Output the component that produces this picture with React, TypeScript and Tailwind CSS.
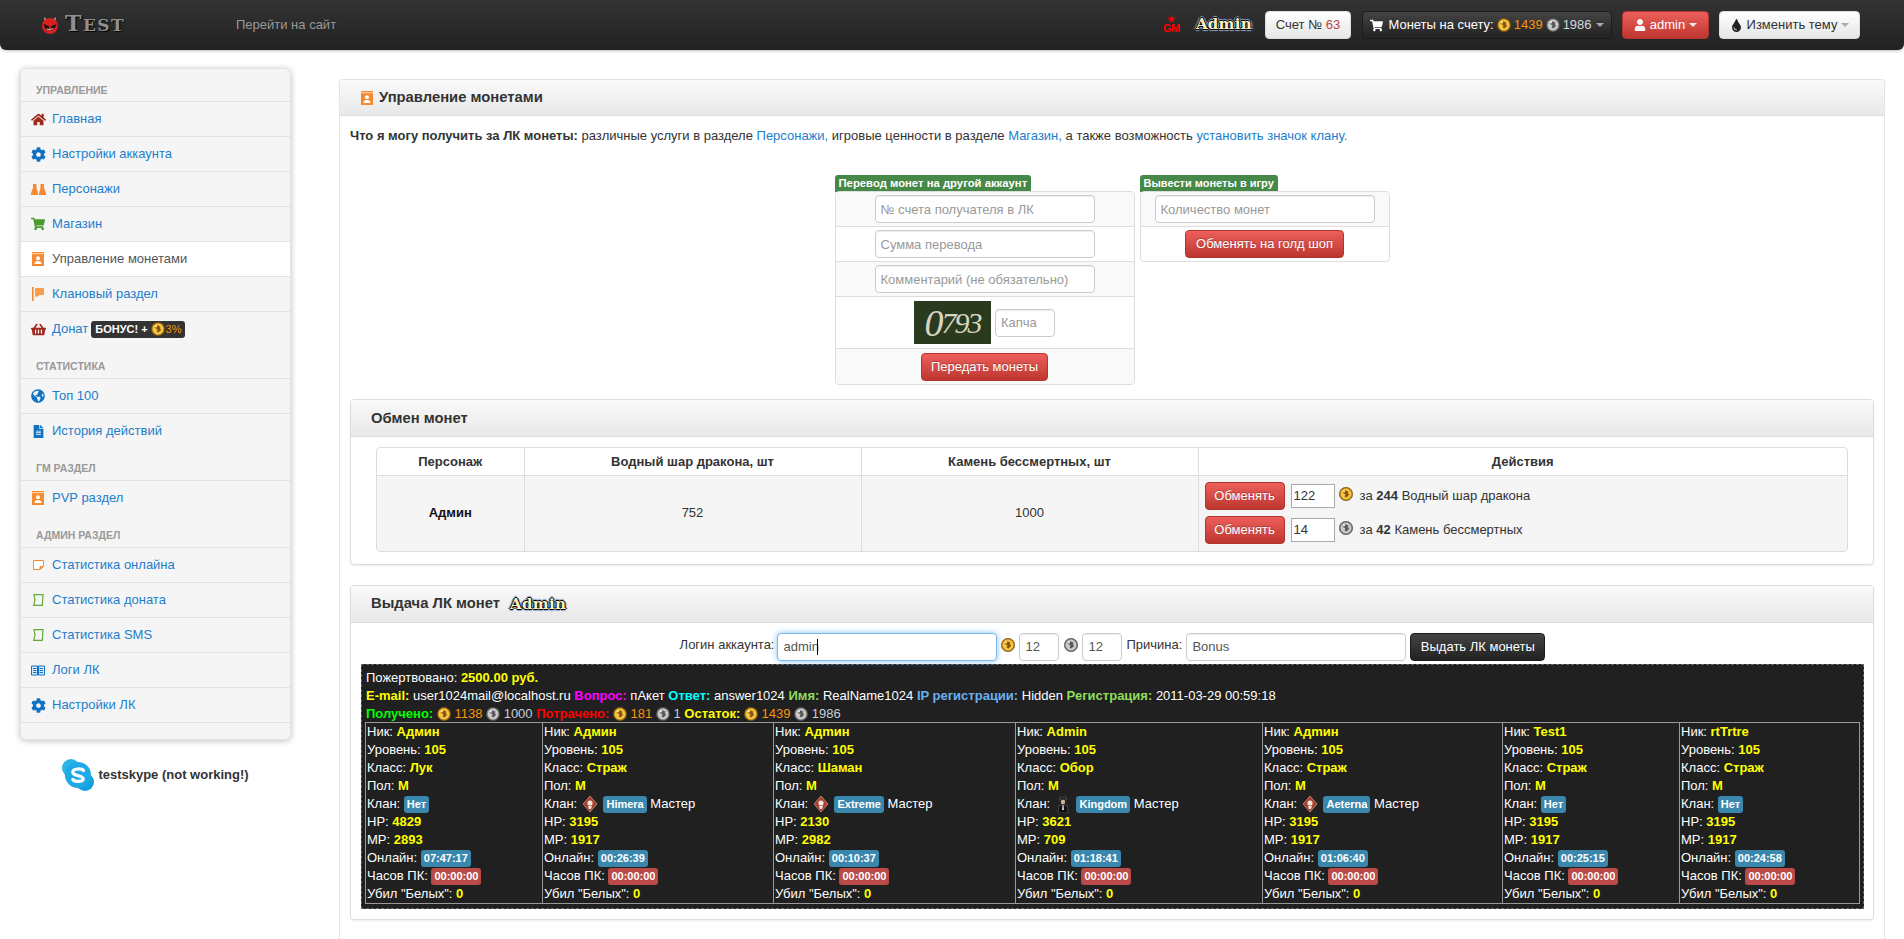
import React from 'react';
import {
  FaHome,
  FaCog,
  FaShoppingCart,
  FaShoppingBasket,
  FaGlobeAmericas,
  FaFileAlt,
  FaUser,
  FaTint,
} from 'react-icons/fa';

const Coin = ({ silver = false, size = 14 }: { silver?: boolean; size?: number }) => (
  <svg width={size} height={size} viewBox="0 0 14 14" className="inline-block shrink-0 align-[-3px]">
    <circle cx="7" cy="7" r="6.7" fill={silver ? '#777' : '#b57a1e'} stroke={silver ? '#444' : '#6a4412'} strokeWidth=".6" />
    <circle cx="7" cy="7" r="5.400" fill={silver ? '#cacaca' : '#f2c840'} />
    <path d="M3.500 5.500l3-2.200 3.200 1.500-1 1.200 1.500 1.800-2.700 2.600-2-1 1-1.800z" fill={silver ? '#5a5a5a' : '#8a5212'} />
    <circle cx="5" cy="4.500" r="1" fill={silver ? '#eee' : '#fff0a0'} />
  </svg>
);

const BadgeIcon = () => (
  <svg width="12" height="14" viewBox="0 0 12 14">
    <rect width="12" height="14" fill="#f58a32" />
    <rect y="1.200" width="12" height="1" fill="#ffd9b0" />
    <circle cx="6" cy="6.200" r="2" fill="#fff" />
    <path d="M2.500 12c0-2.400 1.600-3 3.500-3s3.500.6 3.500 3z" fill="#fff" />
  </svg>
);

const FlagIcon = () => (
  <svg width="12" height="14" viewBox="0 0 12 14">
    <rect x="0" y="0" width="1.600" height="14" fill="#f58a32" />
    <path d="M3 1h9v7H7.500L6 9.500H3z" fill="#fa9c4a" />
  </svg>
);

const PeopleIcon = () => (
  <svg width="15" height="11" viewBox="0 0 15 11">
    <path d="M2 0h3.500v4L7 9v2H0V9l2-5z" fill="#f58a32" />
    <path d="M9.500 0H13v4l2 5v2H8V9l1.500-5z" fill="#f58a32" />
  </svg>
);

const NoteIcon = () => (
  <svg width="11" height="10" viewBox="0 0 11 10">
    <path d="M.5.5h10v6l-3 3h-7z" fill="#fff" stroke="#f58a32" />
    <path d="M7 9V6.500h3" fill="#f58a32" stroke="#f58a32" />
  </svg>
);

const ScrollIcon = () => (
  <svg width="11" height="12" viewBox="0 0 11 12">
    <path d="M1 .7h9L9.300 11.300H.7L2 6z" fill="none" stroke="#62a83a" strokeWidth="1.200" />
  </svg>
);

const BookIcon = () => (
  <svg width="14" height="11" viewBox="0 0 14 11">
    <path d="M.5 1h6v9h-6zM7.500 1h6v9h-6z" fill="#dcebf8" stroke="#0f72c4" />
    <path d="M2 3.500h3.500M2 5.500h3.500M2 7.500h3.500M8.500 3.500H12M8.500 5.500H12M8.500 7.500H12" stroke="#0f72c4" />
  </svg>
);

const DevilIcon = () => (
  <svg width="18" height="18" viewBox="0 0 18 18">
    <path d="M3 1l1 5 3-1zM15 1l-1 5-3-1z" fill="#e8c8a0" />
    <circle cx="9" cy="10" r="8" fill="#d92020" />
    <path d="M2.500 8l6 2.500-1 1.500H4zM15.500 8l-6 2.500 1 1.500H14z" fill="#111" />
    <path d="M4 13q5 3 10-1.500-5 1.500-10 1.500z" fill="#fff" stroke="#300" strokeWidth=".6" />
  </svg>
);

const SkypeIcon = () => (
  <svg width="32" height="32" viewBox="0 0 32 32">
    <circle cx="9" cy="9" r="9" fill="#2bb3ea" />
    <circle cx="23" cy="23" r="9" fill="#12a0de" />
    <circle cx="16" cy="16" r="13" fill="#1eaae6" />
    <path d="M21.500 11.500C20 9.500 11 9 10.800 13c-.2 4.500 10.400 3 10.400 6.800 0 3.400-8.200 3.400-10.400.6" fill="none" stroke="#fff" strokeWidth="3.200" strokeLinecap="round" />
  </svg>
);

const ClanIcon = ({ dark = false }: { dark?: boolean }) =>
  dark ? (
    <svg width="18" height="18" viewBox="0 0 18 18" className="inline-block align-middle mr-[1px]">
      <path d="M6 2h6l1 3H5z" fill="#222" stroke="#777" strokeWidth=".4" />
      <circle cx="9" cy="7" r="2.200" fill="#c9b7a5" />
      <path d="M4 18l1-8h8l1 8z" fill="#101010" stroke="#888" strokeWidth=".4" />
      <path d="M8.500 10h1l.5 5h-2z" fill="#ddd" />
    </svg>
  ) : (
    <svg width="18" height="18" viewBox="0 0 18 18" className="inline-block align-middle mr-[1px]">
      <path d="M9 1l7 8-7 8-7-8z" fill="#a8402f" stroke="#d8a08a" strokeWidth=".7" />
      <circle cx="9" cy="8" r="2.600" fill="#f2e6dc" />
      <path d="M7 11h4l-1 3H8z" fill="#f2e6dc" />
    </svg>
  );

const GmIcon = () => (
  <div className="flex flex-col items-center w-[17px] text-[#f00] font-bold leading-none">
    <span className="text-[9px] h-[7px] leading-[7px]">★</span>
    <span className="text-[11px] leading-[11px] tracking-[-0.5px]">GM</span>
  </div>
);

const AdminLogo = () => (
  <span className="inline-block font-['DejaVu_Serif',serif] font-bold text-[15px] tracking-[0.3px] leading-[18px] text-[#fff2c0] [text-shadow:1px_0_0_#000,-1px_0_0_#000,0_1px_0_#000,0_-1px_0_#000,2px_0_1px_#8fa4d0,-2px_0_1px_#8fa4d0,0_2px_1px_#8fa4d0,0_-2px_1px_#8fa4d0]">
    Admin
  </span>
);

type NavItem = { label: React.ReactNode; icon: React.ReactNode; active?: boolean };
type Section = { title: string; items: NavItem[] };

const sections: Section[] = [
  {
    title: 'Управление',
    items: [
      { label: 'Главная', icon: <FaHome className="text-[#a12a20] text-[15px]" /> },
      { label: 'Настройки аккаунта', icon: <FaCog className="text-[#0f72c4] text-[15px]" /> },
      { label: 'Персонажи', icon: <PeopleIcon /> },
      { label: 'Магазин', icon: <FaShoppingCart className="text-[#4c9a2e] text-[14px]" /> },
      { label: 'Управление монетами', icon: <BadgeIcon />, active: true },
      { label: 'Клановый раздел', icon: <FlagIcon /> },
      {
        label: (
          <span className="flex items-center gap-[3px]">
            Донат
            <span className="flex items-center h-[17px] pl-[4px] pr-[3px] rounded-[3px] bg-[#333] text-white text-[11px] font-bold">
              БОНУС! +
              <span className="ml-[3px] flex"><Coin /></span>
              <span className="text-[#f89406] font-normal ml-[1px]">3%</span>
            </span>
          </span>
        ),
        icon: <FaShoppingBasket className="text-[#a12a20] text-[15px]" />,
      },
    ],
  },
  {
    title: 'Статистика',
    items: [
      { label: 'Топ 100', icon: <FaGlobeAmericas className="text-[#0f72c4] text-[14px]" /> },
      { label: 'История действий', icon: <FaFileAlt className="text-[#0f72c4] text-[13px]" /> },
    ],
  },
  { title: 'ГМ раздел', items: [{ label: 'PVP раздел', icon: <BadgeIcon /> }] },
  {
    title: 'Админ раздел',
    items: [
      { label: 'Статистика онлайна', icon: <NoteIcon /> },
      { label: 'Статистика доната', icon: <ScrollIcon /> },
      { label: 'Статистика SMS', icon: <ScrollIcon /> },
      { label: 'Логи ЛК', icon: <BookIcon /> },
      { label: 'Настройки ЛК', icon: <FaCog className="text-[#0f72c4] text-[15px]" /> },
    ],
  },
];

const inputBase = 'h-[28px] px-[5px] text-[13px] text-[#555] placeholder:text-[#999] bg-white rounded-[4px] outline-none';
const inputClass = `${inputBase} border border-[#ccc] shadow-[inset_0_1px_1px_rgba(0,0,0,0.075)]`;
const redBtn =
  'h-[28px] rounded-[4px] text-[13px] text-white bg-gradient-to-b from-[#ee5f5b] to-[#bd362f] border border-[#b0352f] [text-shadow:0_-1px_0_rgba(0,0,0,0.25)]';

const Sidebar = () => (
  <aside className="ml-[20px] mt-[18px] w-[271px] shrink-0">
    <div className="h-[672px] bg-[#f5f5f5] border border-[#e3e3e3] rounded-[6px] shadow-[0_1px_6px_rgba(0,0,0,0.25)] overflow-hidden box-border">
      {sections.map((s) => (
        <div key={s.title}>
          <div className={`${s.title === 'Управление' ? 'h-[32px] pt-[13px]' : 'h-[32px] pt-[12px]'} pl-[15px] text-[10.5px] leading-[16px] font-bold uppercase text-[#999]`}>
            {s.title}
          </div>
          {s.items.map((it, i) => (
            <div
              key={i}
              className={`h-[35px] flex items-center border-t border-[#e2e2e2] text-[13px] ${it.active ? 'bg-white text-[#555]' : 'text-[#1d7ecb]'}`}
            >
              <span className="w-[31px] shrink-0 flex justify-center pl-[7px] pr-[4px] box-border">{it.icon}</span>
              {it.label}
            </div>
          ))}
        </div>
      ))}
      <div className="border-t border-[#e2e2e2]" />
    </div>
    <div className="flex items-center justify-center gap-[4px] mt-[19px] text-[13px] font-bold text-[#333]">
      <SkypeIcon />
      testskype (not working!)
    </div>
  </aside>
);

const Navbar = () => (
  <header className="h-[50px] shrink-0 flex items-center pl-[41px] pr-[44px] rounded-b-[6px] bg-gradient-to-b from-[#333] to-[#222] shadow-[0_1px_3px_rgba(0,0,0,0.25)] text-[13px]">
    <DevilIcon />
    <span className="ml-[6px] w-[62px] -mt-[5px] font-['DejaVu_Serif',serif] font-bold text-[22px] tracking-[1.5px] leading-none whitespace-nowrap text-[#8f8f8f] [text-shadow:1px_1px_1px_#000]">
      T<span className="text-[17px]">EST</span>
    </span>
    <a className="ml-[109px] text-[#999]">Перейти на сайт</a>
    <div className="ml-auto flex items-center">
      <GmIcon />
      <span className="ml-[16px]">
        <AdminLogo />
      </span>
      <button className="ml-[13px] w-[86px] h-[28px] rounded-[4px] text-[#333] bg-gradient-to-b from-white to-[#e6e6e6] border border-[#ddd]">
        Счет № <span className="text-[#b94a48]">63</span>
      </button>
      <button className="ml-[11px] w-[250px] h-[28px] flex items-center justify-center gap-[3px] rounded-[4px] text-white bg-gradient-to-b from-[#444] to-[#222] border border-[#1c1c1c]">
        <FaShoppingCart className="text-[13px] mr-[2px]" />
        Монеты на счету:
        <Coin />
        <span className="text-[#f89406]">1439</span>
        <Coin silver />
        <span className="text-[#d0d8e0]">1986</span>
        <span className="ml-[1px] border-x-[4px] border-x-transparent border-t-[4px] border-t-[#aaa]" />
      </button>
      <button className="ml-[10px] w-[87px] h-[28px] flex items-center justify-center gap-[4px] rounded-[4px] text-white bg-gradient-to-b from-[#ee5f5b] to-[#bd362f] border border-[#b0352f]">
        <FaUser className="text-[12px]" />
        admin
        <span className="border-x-[4px] border-x-transparent border-t-[4px] border-t-[#eee]" />
      </button>
      <button className="ml-[10px] w-[141px] h-[28px] flex items-center justify-center gap-[4px] rounded-[4px] text-[#333] bg-gradient-to-b from-white to-[#e6e6e6] border border-[#ddd]">
        <FaTint className="text-[13px] text-[#222]" />
        Изменить тему
        <span className="border-x-[4px] border-x-transparent border-t-[4px] border-t-[#aaa]" />
      </button>
    </div>
  </header>
);

const PanelHead = ({ tall = true, children }: { tall?: boolean; children: React.ReactNode }) => (
  <div className={`${tall ? 'h-[37px]' : 'h-[36px]'} flex items-center bg-gradient-to-b from-[#fafafa] to-[#e8e8e8] border-b border-[#ddd] text-[14.8px] font-bold text-[#333]`}>
    {children}
  </div>
);

const Transfer = () => (
  <div className="flex justify-center gap-[5px] mt-[30px]">
    <div className="w-[300px]">
      <span className="block w-fit h-[17px] px-[4px] rounded-t-[3px] bg-[#468847] text-white text-[11.3px] font-bold leading-[17px]">
        Перевод монет на другой аккаунт
      </span>
      <div className="border border-[#ddd] rounded-[4px] overflow-hidden -mt-[1px]">
        <div className="h-[35px] flex items-center justify-center bg-[#f9f9f9] border-b border-[#ddd]">
          <input className={`${inputClass} w-[220px]`} placeholder="№ счета получателя в ЛК" />
        </div>
        <div className="h-[35px] flex items-center justify-center border-b border-[#ddd]">
          <input className={`${inputClass} w-[220px]`} placeholder="Сумма перевода" />
        </div>
        <div className="h-[35px] flex items-center justify-center bg-[#f9f9f9] border-b border-[#ddd]">
          <input className={`${inputClass} w-[220px]`} placeholder="Комментарий (не обязательно)" />
        </div>
        <div className="h-[52px] flex items-center justify-center gap-[4px] border-b border-[#ddd]">
          <div className="w-[77px] h-[43px] flex items-center justify-center bg-[#2a3a1e] text-[#d8d4c0] font-['Liberation_Serif',serif] italic text-[30px] leading-[40px] tracking-[-2px]">
            <span className="text-[38px]">0</span>793
          </div>
          <input className={`${inputClass} w-[60px]`} placeholder="Капча" />
        </div>
        <div className="h-[35px] flex items-center justify-center bg-[#f9f9f9]">
          <button className={`${redBtn} w-[127px]`}>Передать монеты</button>
        </div>
      </div>
    </div>
    <div className="w-[250px]">
      <span className="block w-fit h-[17px] px-[4px] rounded-t-[3px] bg-[#468847] text-white text-[11px] font-bold leading-[17px]">
        Вывести монеты в игру
      </span>
      <div className="border border-[#ddd] rounded-[4px] overflow-hidden -mt-[1px]">
        <div className="h-[35px] flex items-center justify-center bg-[#f9f9f9] border-b border-[#ddd]">
          <input className={`${inputClass} w-[220px]`} placeholder="Количество монет" />
        </div>
        <div className="h-[34px] flex items-center justify-center">
          <button className={`${redBtn} w-[159px]`}>Обменять на голд шоп</button>
        </div>
      </div>
    </div>
  </div>
);

const Exchange = () => (
  <section className="mt-[14px] mx-[10px] border border-[#ddd] rounded-[4px] shadow-[0_1px_2px_rgba(0,0,0,0.08)] overflow-hidden">
    <PanelHead>
      <span className="pl-[20px]">Обмен монет</span>
    </PanelHead>
    <div className="pt-[10px] px-[25px] pb-[12px]">
      <div className="border border-[#ddd] rounded-[4px] overflow-hidden">
        <table className="w-full table-fixed border-collapse text-[13px] text-[#333]">
          <colgroup>
            <col className="w-[147px]" />
            <col className="w-[337px]" />
            <col className="w-[337px]" />
            <col />
          </colgroup>
          <thead>
            <tr className="h-[27px] font-bold">
              <th className="border-b border-[#ddd]">Персонаж</th>
              <th className="border-b border-l border-[#ddd]">Водный шар дракона, шт</th>
              <th className="border-b border-l border-[#ddd]">Камень бессмертных, шт</th>
              <th className="border-b border-l border-[#ddd]">Действия</th>
            </tr>
          </thead>
          <tbody className="bg-[#f5f5f5]">
            <tr>
              <td className="text-center font-bold text-[#111]">Админ</td>
              <td className="text-center border-l border-[#ddd]">752</td>
              <td className="text-center border-l border-[#ddd]">1000</td>
              <td className="border-l border-[#ddd] pl-[6px] pt-[6px] pb-[7px]">
                <div className="flex items-center h-[28px]">
                  <button className={`${redBtn} w-[80px]`}>Обменять</button>
                  <input defaultValue="122" className="ml-[6px] w-[44px] h-[24px] pl-[2px] bg-white border border-[#aaa] text-[13px] outline-none" />
                  <span className="ml-[4px] mr-[7px] -mt-[3px] flex"><Coin /></span>
                  за&nbsp;<b>244</b>&nbsp;Водный шар дракона
                </div>
                <div className="flex items-center h-[28px] mt-[6px]">
                  <button className={`${redBtn} w-[80px]`}>Обменять</button>
                  <input defaultValue="14" className="ml-[6px] w-[44px] h-[24px] pl-[2px] bg-white border border-[#aaa] text-[13px] outline-none" />
                  <span className="ml-[4px] mr-[7px] -mt-[3px] flex"><Coin silver /></span>
                  за&nbsp;<b>42</b>&nbsp;Камень бессмертных
                </div>
              </td>
            </tr>
          </tbody>
        </table>
      </div>
    </div>
  </section>
);

type Char = {
  nick: string;
  cls: string;
  clan: string | null;
  clanDark?: boolean;
  hp: number;
  mp: number;
  online: string;
  width: string;
};

const chars: Char[] = [
  { nick: 'Админ', cls: 'Лук', clan: null, hp: 4829, mp: 2893, online: '07:47:17', width: 'w-[177px]' },
  { nick: 'Админ', cls: 'Страж', clan: 'Himera', hp: 3195, mp: 1917, online: '00:26:39', width: 'w-[231px]' },
  { nick: 'Адmин', cls: 'Шаман', clan: 'Extreme', hp: 2130, mp: 2982, online: '00:10:37', width: 'w-[242px]' },
  { nick: 'Admin', cls: 'Обор', clan: 'Kingdom', clanDark: true, hp: 3621, mp: 709, online: '01:18:41', width: 'w-[247px]' },
  { nick: 'Адmин', cls: 'Страж', clan: 'Aeterna', hp: 3195, mp: 1917, online: '01:06:40', width: 'w-[240px]' },
  { nick: 'Test1', cls: 'Страж', clan: null, hp: 3195, mp: 1917, online: '00:25:15', width: 'w-[177px]' },
  { nick: 'rtTrtre', cls: 'Страж', clan: null, hp: 3195, mp: 1917, online: '00:24:58', width: '' },
];

const Label = ({ red = false, children }: { red?: boolean; children: React.ReactNode }) => (
  <span className={`inline-block h-[17px] px-[3px] rounded-[3px] text-[11px] font-bold leading-[17px] align-middle ${red ? 'bg-[#b94a48]' : 'bg-[#3a87ad]'}`}>
    {children}
  </span>
);

const Y = ({ children }: { children: React.ReactNode }) => <b className="text-[#ff0]">{children}</b>;

const CharCell = ({ c }: { c: Char }) => (
  <td className="border border-[#999] align-top pl-[1px] leading-[18px] whitespace-nowrap">
    <div>Ник: <Y>{c.nick}</Y></div>
    <div>Уровень: <Y>105</Y></div>
    <div>Класс: <Y>{c.cls}</Y></div>
    <div>Пол: <Y>М</Y></div>
    <div>
      Клан:{' '}
      {c.clan ? (
        <>
          <ClanIcon dark={c.clanDark} /> <Label>{c.clan}</Label> Мастер
        </>
      ) : (
        <Label>Нет</Label>
      )}
    </div>
    <div>HP: <Y>{c.hp}</Y></div>
    <div>MP: <Y>{c.mp}</Y></div>
    <div>Онлайн: <Label>{c.online}</Label></div>
    <div>Часов ПК: <Label red>00:00:00</Label></div>
    <div>Убил "Белых": <Y>0</Y></div>
  </td>
);

const Issue = () => (
  <section className="mt-[20px] mx-[10px] border border-[#ddd] rounded-[4px] shadow-[0_1px_2px_rgba(0,0,0,0.08)] overflow-hidden">
    <PanelHead>
      <span className="pl-[20px] mr-[10px]">Выдача ЛК монет</span>
      <AdminLogo />
    </PanelHead>
    <div className="pt-[10px] pl-[10px] pr-[9px] pb-[10px]">
      <div className="flex items-center justify-center h-[28px] text-[13px] text-[#333]">
        <span className="-mt-[3px]">Логин аккаунта:</span>
        <div className="relative ml-[3px] flex">
          <input
            defaultValue="admin"
            className={`${inputBase} w-[220px] border border-[#7db9ea] shadow-[0_0_6px_rgba(82,168,236,0.7)]`}
          />
          <span className="absolute left-[40px] top-[6px] w-[1px] h-[16px] bg-black" />
        </div>
        <span className="ml-[4px] -mt-[3px] flex"><Coin /></span>
        <input defaultValue="12" className={`${inputClass} w-[40px] ml-[4px]`} />
        <span className="ml-[5px] -mt-[3px] flex"><Coin silver /></span>
        <input defaultValue="12" className={`${inputClass} w-[40px] ml-[4px]`} />
        <span className="ml-[4px] -mt-[3px]">Причина:</span>
        <input defaultValue="Bonus" className={`${inputClass} w-[220px] ml-[4px]`} />
        <button className="ml-[4px] w-[135px] h-[28px] rounded-[4px] text-white bg-gradient-to-b from-[#444] to-[#222] border border-[#1c1c1c]">
          Выдать ЛК монеты
        </button>
      </div>
      <div className="mt-[3px] h-[245px] bg-[#202020] border border-dashed border-[#666] pt-[4px] px-[3px] text-[13px] leading-[18px] text-white">
        <div className="pl-[1px]">Пожертвовано: <Y>2500.00 руб.</Y></div>
        <div className="pl-[1px]">
          <Y>E-mail:</Y> user1024mail@localhost.ru <b className="text-[#f0f]">Вопрос:</b> пАкет{' '}
          <b className="text-[#0ff]">Ответ:</b> answer1024 <b className="text-[#8fdc5a]">Имя:</b> RealName1024{' '}
          <b className="text-[#6ab0f0]">IP регистрации:</b> Hidden <b className="text-[#8fdc5a]">Регистрация:</b> 2011-03-29 00:59:18
        </div>
        <div className="pl-[1px] h-[17px]">
          <b className="text-[#0f0]">Получено:</b> <Coin /> <span className="text-[#f89406]">1138</span> <Coin silver />{' '}
          <span className="text-[#c8d0dc]">1000</span> <b className="text-[#f00]">Потрачено:</b> <Coin />{' '}
          <span className="text-[#f89406]">181</span> <Coin silver /> <span className="text-[#c8d0dc]">1</span>{' '}
          <Y>Остаток:</Y> <Coin /> <span className="text-[#f89406]">1439</span> <Coin silver />{' '}
          <span className="text-[#c8d0dc]">1986</span>
        </div>
        <table className="w-full table-fixed border-collapse">
          <colgroup>
            {chars.map((c) => (
              <col key={c.online} className={c.width} />
            ))}
          </colgroup>
          <tbody>
            <tr>
              {chars.map((c) => (
                <CharCell key={c.online} c={c} />
              ))}
            </tr>
          </tbody>
        </table>
      </div>
    </div>
  </section>
);

const Main = () => (
  <main className="ml-[48px] mr-[19px] mt-[29px] flex-1 min-w-0 h-[860px] border border-b-0 border-[#e3e3e3] rounded-t-[4px] overflow-hidden">
    <PanelHead tall={false}>
      <span className="ml-[21px] mr-[6px] flex"><BadgeIcon /></span>
      Управление монетами
    </PanelHead>
    <p className="mt-[11px] ml-[10px] text-[13px] leading-[18px] text-[#333]">
      <b>Что я могу получить за ЛК монеты:</b> различные услуги в разделе <a className="text-[#1d7ecb]">Персонажи,</a> игровые ценности в разделе{' '}
      <a className="text-[#1d7ecb]">Магазин,</a> а также возможность <a className="text-[#1d7ecb]">установить значок клану.</a>
    </p>
    <Transfer />
    <Exchange />
    <Issue />
  </main>
);

export default function App() {
  return (
    <div className="w-[1904px] h-[939px] overflow-hidden flex flex-col bg-white font-['Liberation_Sans',Arial,sans-serif]">
      <Navbar />
      <div className="flex flex-1 min-h-0">
        <Sidebar />
        <Main />
      </div>
    </div>
  );
}
